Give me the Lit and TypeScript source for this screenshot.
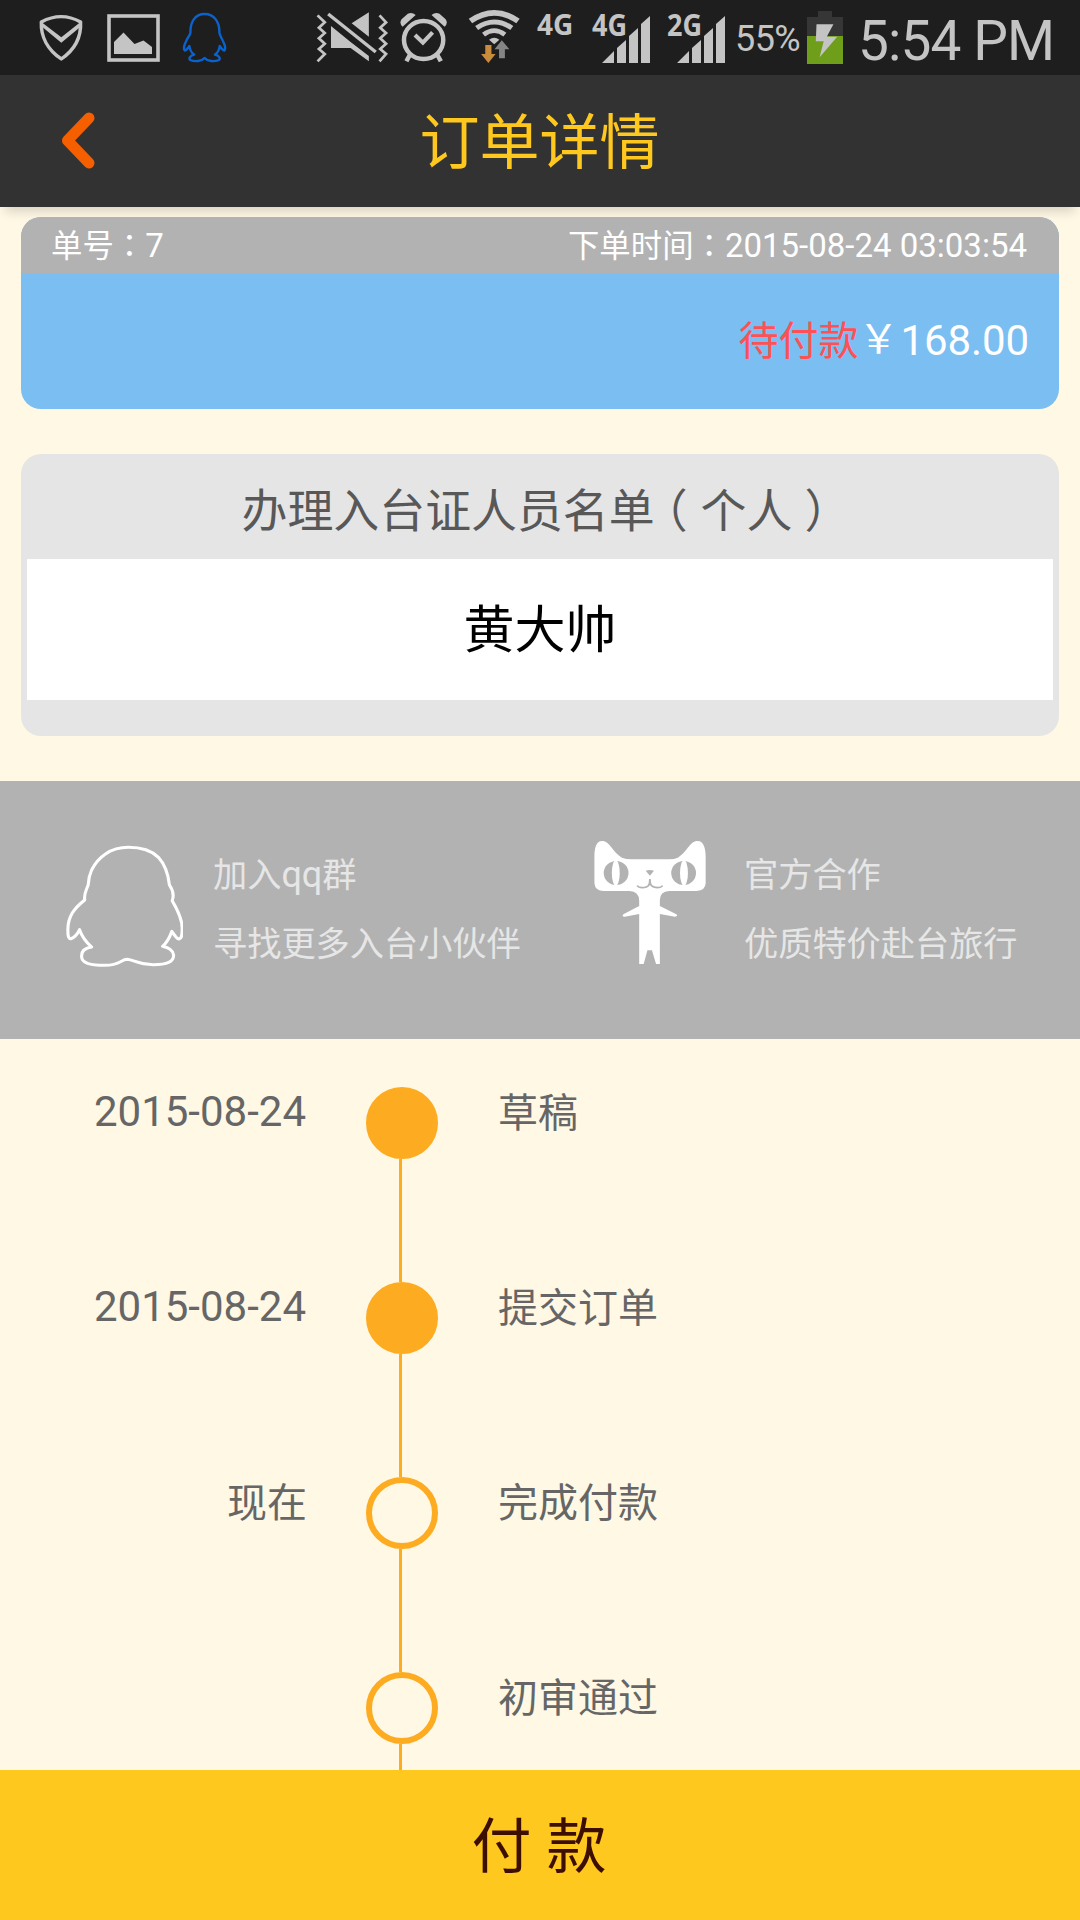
import { LitElement, html, css, svg } from "lit";
import { customElement, property } from "lit/decorators.js";

interface Step {
  date: string;
  label: string;
  done: boolean;
}

const STEPS: Step[] = [
  { date: "2015-08-24", label: "草稿", done: true },
  { date: "2015-08-24", label: "提交订单", done: true },
  { date: "现在", label: "完成付款", done: false },
  { date: "", label: "初审通过", done: false },
];

const fonts = css`
  :host {
    display: block;
    box-sizing: border-box;
    font-family: Roboto, "Noto Sans CJK SC", sans-serif;
  }
  * {
    box-sizing: border-box;
  }
  svg {
    display: block;
    flex: none;
  }
`;

@customElement("status-bar")
class StatusBar extends LitElement {
  static styles = [
    fonts,
    css`
      :host {
        height: 75px;
        background: #1e1e1e;
        color: #c4c4c4;
      }
      .row {
        display: flex;
        height: 75px;
        padding-left: 38px;
      }
      .image { margin-left: 19px; }
      .qq { margin-left: 21px; }
      .mute { margin-left: 86px; }
      .alarm { margin-left: 9px; }
      .wifi { margin-left: 20px; }
      .net {
        width: 40px;
        margin-left: 16px;
        padding-top: 5px;
        font: 700 28px/38px "Open Sans", sans-serif;
      }
      .signal {
        position: relative;
        width: 60px;
        margin-left: 15px;
      }
      .signal + .signal { margin-left: 15px; }
      .signal svg { margin-left: 10px; }
      .tag {
        position: absolute;
        left: 0;
        top: 6px;
        font: 700 30px/38px "Open Sans", sans-serif;
        transform: scaleX(0.9);
        transform-origin: 0 0;
      }
      .percent {
        width: 70px;
        margin-left: 8px;
        font-size: 36px;
        line-height: 78px;
        letter-spacing: -0.6px;
      }
      .battery { margin-left: 2px; }
      .clock {
        margin-left: 15px;
        font-size: 55px;
        line-height: 82px;
        letter-spacing: -0.9px;
        white-space: nowrap;
      }
    `,
  ];

  private signal(tag: string) {
    return html`<div class="signal">
      <svg width="49" height="75" viewBox="0 0 49 75" fill="#c4c4c4">
        <path d="M0 63L12 51V63ZM15 48L24 40V63H15ZM27 36L36 28V63H27ZM39 24L48 16V63H39Z" />
      </svg>
      <span class="tag">${tag}</span>
    </div>`;
  }

  render() {
    return html`<div class="row">
      <svg width="50" height="75" viewBox="38 0 50 75">
        <g transform="scale(.3444 .3333)" fill="none" stroke="#c4c4c4">
          <path stroke-width="10" stroke-linejoin="round" d="M120 66Q178 34 234 66C236 110 216 150 178 177C139 150 118 110 120 66Z" />
          <path d="M120 66L178 112L234 66L234 80L178 128L122 80Z" fill="#c4c4c4" stroke="none" />
        </g>
      </svg>
      <svg class="image" width="53" height="75" viewBox="107 0 53 75">
        <rect x="109" y="16" width="49" height="44" fill="none" stroke="#c4c4c4" stroke-width="3.6" />
        <path fill="#c4c4c4" d="M114 54V42L123.500 32.500L134.500 44L143.500 40.500L152 47V54Z" />
      </svg>
      <svg class="qq" width="49" height="75" viewBox="181 0 49 75">
        <path transform="scale(.3444 .3333)" fill="none" stroke="#0a62cc" stroke-width="7" stroke-linejoin="round"
          d="M594 42C566 42 552 66 553 98C552 106 546 111 541 122C534 136 533 148 537 152C542 151 546 144 550 138C551 150 557 159 564 164C553 166 547 174 552 180C566 186 586 184 594 174C602 184 622 186 636 180C641 174 635 166 624 164C631 159 637 150 638 138C642 144 646 151 651 152C655 148 654 136 647 122C642 111 638 106 637 98C638 66 622 42 594 42Z" />
      </svg>
      <svg class="mute" width="74" height="75" viewBox="316 0 74 75">
        <g transform="scale(.3444 .3333)" fill="none" stroke="#c4c4c4" stroke-width="8">
          <path d="M922 46L943 67L926 83L943 99L926 115L943 131L926 147L943 162L922 184" />
          <path d="M1102 46L1121 67L1104 83L1121 99L1104 115L1121 131L1104 147L1121 162L1102 184" />
          <path d="M953 42L1091 156" stroke-width="10" />
          <path d="M961 78L1018 126L1071 168V184L1018 144H961ZM1071 37V110L1021 70Z" fill="#c4c4c4" stroke="none" />
        </g>
      </svg>
      <svg class="alarm" width="48" height="75" viewBox="399 0 48 75">
        <g transform="scale(.3444 .3333)" fill="none" stroke="#c4c4c4">
          <circle cx="1230" cy="120" r="57" stroke-width="13" />
          <path d="M1205 105L1228 128L1256 97" stroke-width="12" />
          <path d="M1190 165L1180 184M1270 165L1280 184" stroke-width="13" />
          <path d="M1169 80Q1158 70 1166 58L1184 41Q1196 35 1207 45ZM1291 80Q1302 70 1294 58L1276 41Q1264 35 1253 45Z" fill="#c4c4c4" stroke="none" />
        </g>
      </svg>
      <svg class="wifi" width="54" height="75" viewBox="467 0 54 75">
        <g transform="scale(.3444 .3333)">
          <g fill="none" stroke="#c4c4c4">
            <path d="M1366 63Q1435 14 1504 63" stroke-width="17" />
            <path d="M1384 84Q1435 48 1486 84" stroke-width="15" />
            <path d="M1404 104Q1435 80 1466 104" stroke-width="14" />
          </g>
          <path d="M1420 119Q1435 107 1450 119L1435 133Z" fill="#c4c4c4" />
          <path d="M1409 135H1427V162H1439L1418 189L1397 162H1409Z" fill="#c98c3c" />
          <path d="M1449 175V148H1436L1457 121L1479 148H1466V175Z" fill="#858585" />
        </g>
      </svg>
      <div class="net">4G</div>
      ${this.signal("4G")} ${this.signal("2G")}
      <div class="percent">55%</div>
      <svg class="battery" width="36" height="75" viewBox="807 0 36 75">
        <path d="M818 11H832V17H843V64H807V17H818Z" fill="#363636" />
        <path d="M807 36H843V64H807Z" fill="#6f9f1a" />
        <path d="M816.500 24.300H833.400L826.800 36.700H837.200L819.600 57.300L823.700 41.300H815.800Z" fill="#c4c4c4" />
      </svg>
      <div class="clock">5:54 PM</div>
    </div>`;
  }
}

@customElement("timeline-step")
class TimelineStep extends LitElement {
  @property({ attribute: false }) step!: Step;

  static styles = [
    fonts,
    css`
      .row {
        display: grid;
        grid-template-columns: 307px 72px 1fr;
        column-gap: 59px;
        height: 195px;
        color: #666;
        font-size: 40px;
        line-height: 53px;
      }
      .date { text-align: right; }
      .date.latin {
        font-size: 42px;
        line-height: 50px;
        padding-right: 1px;
      }
      .label { padding-left: 1px; }
      .dot {
        height: 72px;
        border: 6px solid #fdab20;
        border-radius: 50%;
      }
      .dot.done { background: #fdab20; }
      .line {
        width: 3px;
        height: 123px;
        margin-left: 33px;
        background: #fdab20;
      }
    `,
  ];

  render() {
    const { date, label, done } = this.step;
    return html`<div class="row">
      <div class="date ${/^\d/.test(date) ? "latin" : ""}">${date}</div>
      <div>
        <div class="dot ${done ? "done" : ""}"></div>
        <div class="line"></div>
      </div>
      <div class="label">${label}</div>
    </div>`;
  }
}

@customElement("app-root")
class AppRoot extends LitElement {
  static styles = [
    fonts,
    css`
      .page {
        display: flex;
        flex-direction: column;
        width: 1080px;
        height: 1920px;
        overflow: hidden;
        background: #fff8e5;
      }
      .page > * { flex: none; }
      .header {
        display: grid;
        grid-template-columns: 120px 1fr 120px;
        align-items: center;
        height: 132px;
        background: #323232;
        box-shadow: 0 10px 10px -5px rgba(0, 0, 0, 0.14);
        color: #ffc81e;
        font-size: 60px;
        text-align: center;
      }
      .title {
        height: 132px;
        padding-top: 4px;
        margin-left: -1px;
        line-height: 130px;
      }
      .back { margin-left: 60px; }
      .punct { font-family: "Noto Sans CJK TC", sans-serif; }
      .open,
      .close {
        display: inline-block;
        width: 46px;
        font-feature-settings: "halt";
        text-align: left;
      }
      .open { padding-left: 10px; }
      .close { padding-left: 12px; }
      .order {
        margin: 10px 21px 0;
        height: 192px;
        border-radius: 20px;
        overflow: hidden;
        background: #7abef2;
        color: #fff;
      }
      .meta {
        display: flex;
        justify-content: space-between;
        height: 57px;
        padding: 0 32px 0 30px;
        background: #b2b2b2;
        font-size: 31.400px;
        line-height: 54px;
      }
      .num { font-size: 33px; }
      .amount {
        display: flex;
        justify-content: flex-end;
        padding-right: 30px;
        font-size: 40px;
        line-height: 136px;
      }
      .unpaid { color: #ff5055; }
      .yen { line-height: 132px; }
      .price {
        margin-left: 2px;
        font-size: 42px;
        line-height: 133px;
        letter-spacing: -0.1px;
      }
      .people {
        margin: 45px 21px 0;
        height: 282px;
        padding: 0 6px;
        border-radius: 20px;
        background: #e5e5e5;
        text-align: center;
      }
      .caption {
        height: 105px;
        padding-top: 3px;
        color: #585858;
        font-size: 45.900px;
        line-height: 108px;
      }
      .person {
        height: 141px;
        padding-top: 4px;
        background: #fff;
        color: #000;
        font-size: 51px;
        line-height: 136px;
      }
      .banner {
        display: flex;
        height: 258px;
        margin-top: 45px;
        background: #b2b2b2;
        color: #e6e6e6;
        font-size: 34.200px;
        line-height: 69px;
        white-space: nowrap;
      }
      .banner p { margin: 0; }
      .link { display: flex; }
      .first { width: 532px; padding-left: 60px; }
      .lines { padding: 60px 0 0 30px; }
      .second .lines { padding-left: 32px; }
      .latin { font-size: 36px; }
      .timeline {
        height: 731px;
        padding-top: 48px;
        overflow: hidden;
      }
      .pay {
        height: 150px;
        border: 0;
        padding: 5px 2px 0 0;
        background: #ffc81e;
        color: #3c0f00;
        font: 400 60px/145px Roboto, "Noto Sans CJK SC", sans-serif;
        text-align: center;
      }
    `,
  ];

  private penguin() {
    return svg`<path transform="scale(.3444 .3333)" fill="none" stroke="#fff" stroke-width="9" stroke-linejoin="round"
      d="M373 232C320 232 284 262 266 300C258 318 257 328 256 345C250 362 243 372 246 390C215 415 197 440 197 480C197 500 199 507 207 506C217 502 226 490 231 479C238 500 250 516 266 531C245 534 236 545 237 560C237 578 260 586 305 586C350 586 350 568 370 568C390 570 400 584 445 584C485 584 505 575 504 555C502 540 490 533 472 529C485 518 492 505 499 484C507 495 512 507 520 507C528 505 529 495 529 475C529 445 515 418 500 392C505 378 502 360 492 345C488 310 480 285 460 262C440 242 410 232 373 232Z" />`;
  }

  private cat() {
    return svg`<g transform="scale(.3444 .3333)">
      <path fill="#fff" d="M180 213C163 213 158 235 158 260V340Q160 363 185 363H260Q288 365 288 392V408L242 433Q236 440 246 440L288 432V582H301L312 541H325L337 582H348V432L392 440Q402 439 396 433L348 408V390Q348 365 375 363H455Q480 362 481 340V260C481 235 475 213 458 213C434 213 428 246 400 263Q390 268 375 268H265Q250 268 238 263C210 246 203 213 180 213Z" />
      <g fill="#b2b2b2"><circle cx="221" cy="309" r="36" /><circle cx="417" cy="309" r="36" /><path d="M307 302Q319 298 331 302L319 317Z" /></g>
      <g fill="#fff"><ellipse cx="220" cy="309" rx="11.500" ry="38" /><ellipse cx="418" cy="309" rx="11.500" ry="38" /></g>
      <path fill="none" stroke="#b2b2b2" stroke-width="5" d="M282 347Q286 353 297 353C316 353 319 345 319 327C319 345 323 353 342 353Q352 353 356 347" />
    </g>`;
  }

  render() {
    return html`<div class="page">
      <status-bar></status-bar>
      <div class="header">
        <svg class="back" width="36" height="60" viewBox="60 110 36 60">
          <path d="M89 117L67.500 139.500L89 162" fill="none" stroke="#f55f00" stroke-width="11" stroke-linecap="round" stroke-linejoin="round" />
        </svg>
        <div class="title">订单详情</div>
      </div>
      <div class="order">
        <div class="meta">
          <div>单号<span class="punct">：</span><span class="num">7</span></div>
          <div>下单时间<span class="punct">：</span><span class="num">2015-08-24 03:03:54</span></div>
        </div>
        <div class="amount">
          <span class="unpaid">待付款</span><span class="yen">￥</span><span class="price">168.00</span>
        </div>
      </div>
      <div class="people">
        <div class="caption">办理入台证人员名单<span class="open">（</span>个人<span class="close">）</span></div>
        <div class="person">黄大帅</div>
      </div>
      <div class="banner">
        <div class="link first">
          <svg width="123" height="258" viewBox="60 11 123 258">${this.penguin()}</svg>
          <div class="lines">
            <p>加入<span class="latin">qq</span>群</p>
            <p>寻找更多入台小伙伴</p>
          </div>
        </div>
        <div class="link second">
          <svg width="180" height="258" viewBox="-8 11 180 258">${this.cat()}</svg>
          <div class="lines">
            <p>官方合作</p>
            <p>优质特价赴台旅行</p>
          </div>
        </div>
      </div>
      <div class="timeline">
        ${STEPS.map((s) => html`<timeline-step .step=${s}></timeline-step>`)}
      </div>
      <button class="pay">付 款</button>
    </div>`;
  }
}
